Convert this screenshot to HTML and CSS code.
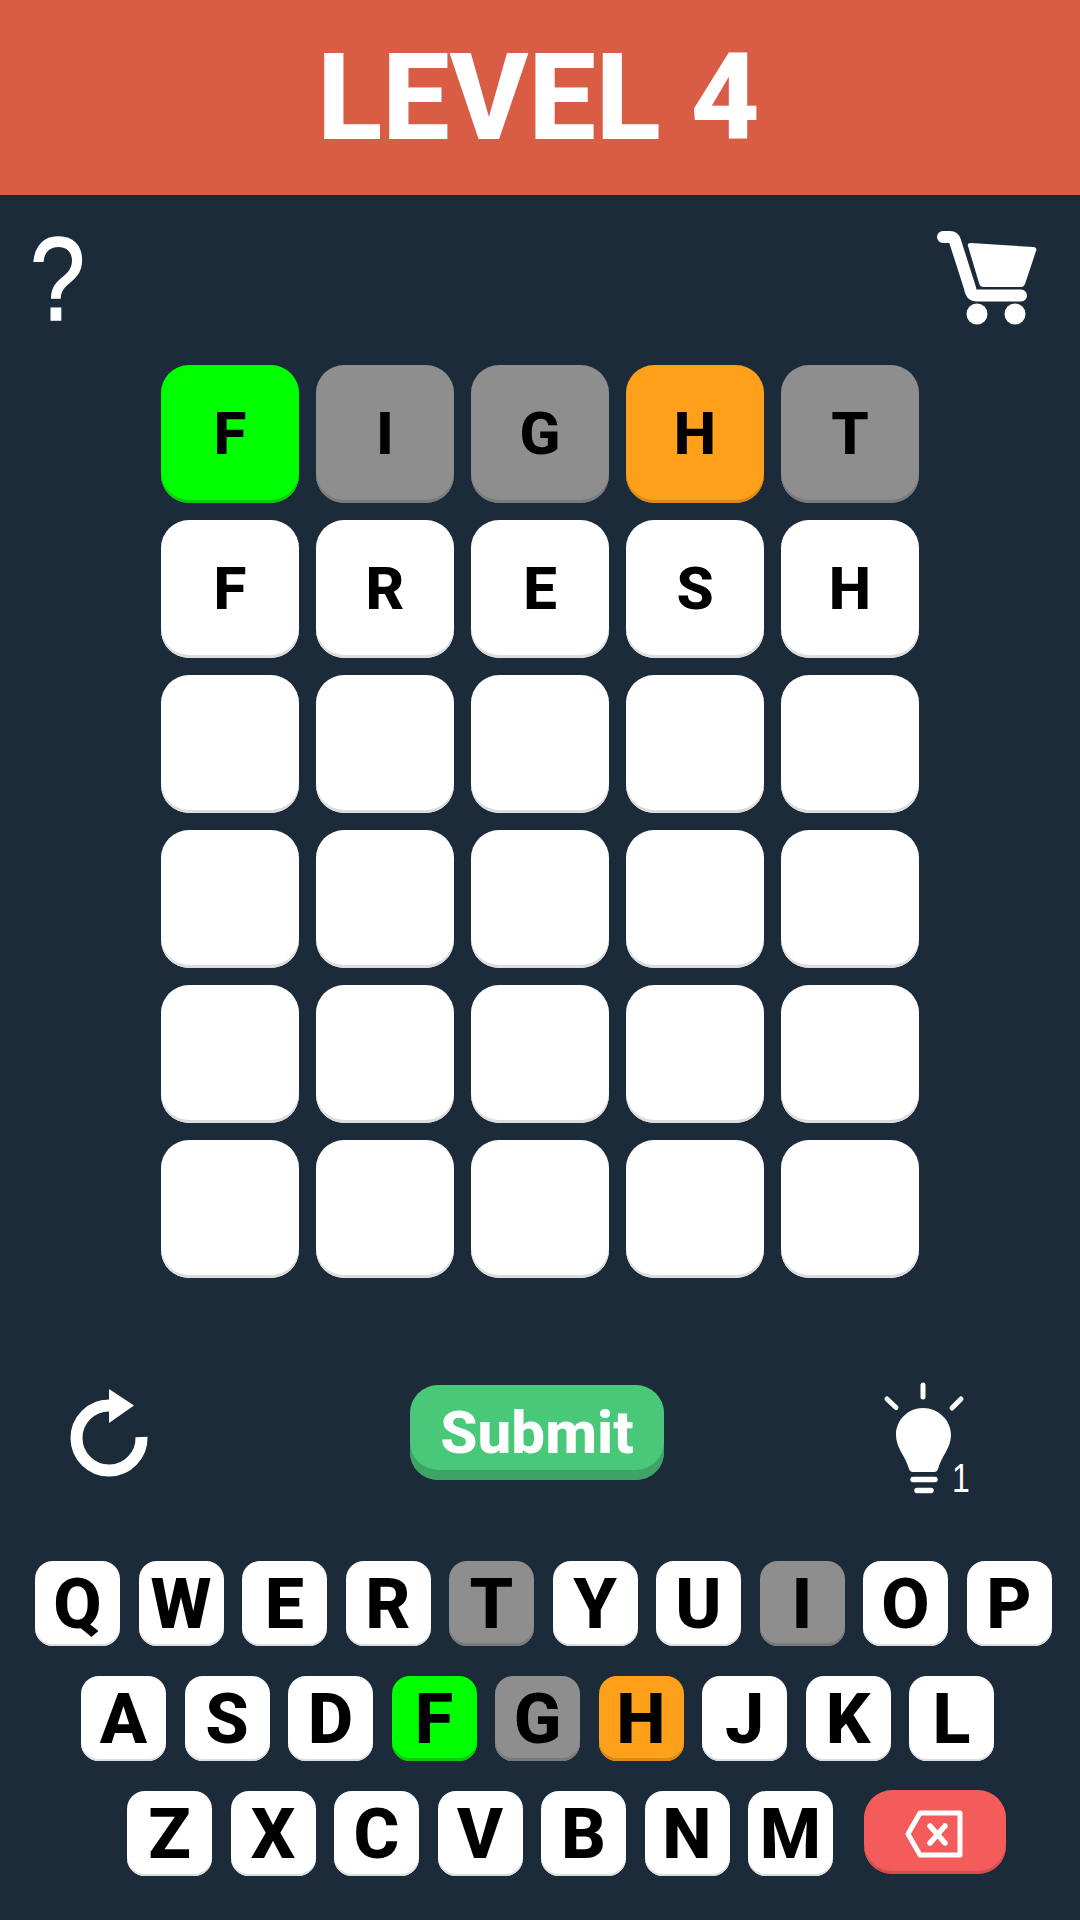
FILE: index.html
```html
<!DOCTYPE html>
<html lang="en">
<head>
<meta charset="utf-8">
<title>Level 4</title>
<link rel="stylesheet" href="styles.css">
</head>
<body>
<header class="header"><h1 class="title">LEVEL 4</h1></header>

<div class="toolbar">
  <span class="help">?</span>
  <svg class="cart" viewBox="0 0 150 130" aria-hidden="true">
    <path class="cart-frame" d="M43 27H50C53 27 54 28 55 31L70 78C71 84 73 85.500 77 85.500H121"/>
    <path class="fill" d="M71 33L133 37C136 37 137 39 136 41L125 74C124 76 123 77 121 77H84C81 77 80 76 79 73L68 36C67 34 69 33 71 33Z"/>
    <circle class="fill" cx="77" cy="104" r="10.5"/>
    <circle class="fill" cx="115" cy="104" r="10.5"/>
  </svg>
</div>

<main class="board">
  <div class="tile green">F</div><div class="tile gray">I</div><div class="tile gray">G</div><div class="tile orange">H</div><div class="tile gray">T</div>
  <div class="tile">F</div><div class="tile">R</div><div class="tile">E</div><div class="tile">S</div><div class="tile">H</div>
  <div class="tile"></div><div class="tile"></div><div class="tile"></div><div class="tile"></div><div class="tile"></div>
  <div class="tile"></div><div class="tile"></div><div class="tile"></div><div class="tile"></div><div class="tile"></div>
  <div class="tile"></div><div class="tile"></div><div class="tile"></div><div class="tile"></div><div class="tile"></div>
  <div class="tile"></div><div class="tile"></div><div class="tile"></div><div class="tile"></div><div class="tile"></div>
</main>

<div class="actions">
  <svg class="refresh" viewBox="0 0 130 130" aria-hidden="true">
    <path class="refresh-arc" d="M101.500 67A32.500 32.500 0 1 1 69 35.500"/>
    <path class="fill" d="M69 19L94 35.500L69 53Z"/>
  </svg>
  <button class="submit" type="button">Submit</button>
  <div class="hint">
    <svg class="bulb" viewBox="0 0 130 140" aria-hidden="true">
      <path class="fill" d="M63 38C48 38 36 50 36 65C36 78 45 85 49 99Q50 102 53 102H74Q77 102 78 99C82 85 91 78 91 65C91 50 78 38 63 38Z"/>
      <path class="bulb-line" d="M53 109.500H75M57 120.500H71"/>
      <path class="bulb-ray" d="M63 15V27M27 29L36 37.500M101 29L92 38"/>
    </svg>
    <span class="hint-count">1</span>
  </div>
</div>

<section class="keyboard">
  <div class="keyrow row-1">
    <div class="key">Q</div><div class="key">W</div><div class="key">E</div><div class="key">R</div><div class="key gray">T</div><div class="key">Y</div><div class="key">U</div><div class="key gray">I</div><div class="key">O</div><div class="key">P</div>
  </div>
  <div class="keyrow row-2">
    <div class="key">A</div><div class="key">S</div><div class="key">D</div><div class="key green">F</div><div class="key gray">G</div><div class="key orange">H</div><div class="key">J</div><div class="key">K</div><div class="key">L</div>
  </div>
  <div class="keyrow row-3">
    <div class="key">Z</div><div class="key">X</div><div class="key">C</div><div class="key">V</div><div class="key">B</div><div class="key">N</div><div class="key">M</div>
    <div class="backspace">
      <svg class="backspace-icon" viewBox="0 0 62 52" aria-hidden="true">
        <path class="bs-outline" d="M16 5H56V47H16L4 26Z"/>
        <path class="bs-x" d="M26 18L41 35M41 18L26 35"/>
      </svg>
    </div>
  </div>
</section>
</body>
</html>
```
FILE: styles.css
```css
* { box-sizing: border-box; }
html, body { margin: 0; padding: 0; }
body {
  width: 1080px;
  height: 1920px;
  overflow: hidden;
  background: #1c2b3a;
  font-family: Roboto, sans-serif;
  color: #000;
}
.header {
  height: 195px;
  background: #d95c44;
  display: flex;
  align-items: center;
  justify-content: center;
}
.title {
  margin: 0 0 0 -3px;
  font-size: 120px;
  font-weight: 800;
  line-height: 1;
  color: #fff;
}
.toolbar {
  height: 170px;
  padding: 15px 30px 0 30px;
  display: flex;
  justify-content: space-between;
  align-items: flex-start;
}
.help {
  font-family: "Liberation Sans", sans-serif;
  font-size: 118px;
  font-weight: 400;
  line-height: 1;
  color: #fff;
  margin-top: 10px;
  transform: scaleX(0.84);
  transform-origin: left center;
  -webkit-text-stroke: 1.500px #fff;
}
.cart { width: 150px; height: 130px; display: block; }
.fill { fill: #fff; }
.cart-frame { fill: none; stroke: #fff; stroke-width: 12; stroke-linecap: round; stroke-linejoin: round; }
.board {
  width: 758px;
  margin-left: 161px;
  display: grid;
  grid-template-columns: repeat(5, 138px);
  grid-auto-rows: 138px;
  gap: 17px;
}
.tile, .key {
  display: flex;
  align-items: center;
  justify-content: center;
  background: #fff;
  box-shadow: inset 0 -3px 0 #dcdcdc;
}
.tile {
  border-radius: 28px;
  font-size: 60px;
  font-weight: 800;
  padding-bottom: 1px;
}
.key {
  width: 85px;
  height: 85px;
  border-radius: 18px;
  font-size: 70px;
  font-weight: 850;
  box-shadow: inset 0 -2px 0 #dcdcdc;
}
.green { background: #00ff00; box-shadow: inset 0 -3px 0 #10c810; }
.gray { background: #8e8e8e; box-shadow: inset 0 -3px 0 #7a7a7a; }
.orange { background: #ffa01a; box-shadow: inset 0 -3px 0 #d98a18; }
.actions {
  margin-top: 92px;
  height: 140px;
  padding-left: 40px;
  display: flex;
  align-items: flex-start;
}
.refresh { width: 130px; height: 130px; display: block; }
.refresh-arc { fill: none; stroke: #fff; stroke-width: 12; }
.submit {
  width: 254px;
  height: 95px;
  margin: 15px 196px 0 240px;
  padding: 0;
  border: 0;
  border-radius: 28px;
  background: #48c878;
  box-shadow: inset 0 -10px 0 #3da466;
  color: #fff;
  font-family: Roboto, sans-serif;
  font-size: 60px;
  font-weight: 800;
  line-height: 1;
}
.hint { position: relative; width: 130px; height: 140px; }
.bulb { width: 130px; height: 140px; display: block; }
.bulb-line { fill: none; stroke: #fff; stroke-width: 5.500; stroke-linecap: round; }
.bulb-ray { fill: none; stroke: #fff; stroke-width: 5; stroke-linecap: round; }
.hint-count {
  position: absolute;
  left: 92px;
  top: 88px;
  color: #fff;
  font-family: "Liberation Sans", sans-serif;
  font-size: 40px;
  font-weight: 400;
  line-height: 1;
  transform: scaleX(0.8);
  transform-origin: left center;
}
.keyboard {
  margin-top: 51px;
  display: flex;
  flex-direction: column;
  gap: 30px;
}
.keyrow { display: flex; gap: 18.500px; }
.row-1 { padding-left: 35px; }
.row-2 { padding-left: 81px; }
.row-3 { padding-left: 127px; }
.backspace {
  width: 142px;
  height: 84px;
  margin: -1px 0 0 12.500px;
  border-radius: 28px;
  background: #f45b5b;
  box-shadow: inset 0 -3px 0 #cf4e4e;
  display: flex;
  align-items: center;
  justify-content: center;
}
.backspace-icon { width: 62px; height: 52px; display: block; transform: translateY(2px); }
.bs-outline { fill: none; stroke: #fff; stroke-width: 5; stroke-linejoin: round; }
.bs-x { fill: none; stroke: #fff; stroke-width: 5.500; stroke-linecap: round; }
```
